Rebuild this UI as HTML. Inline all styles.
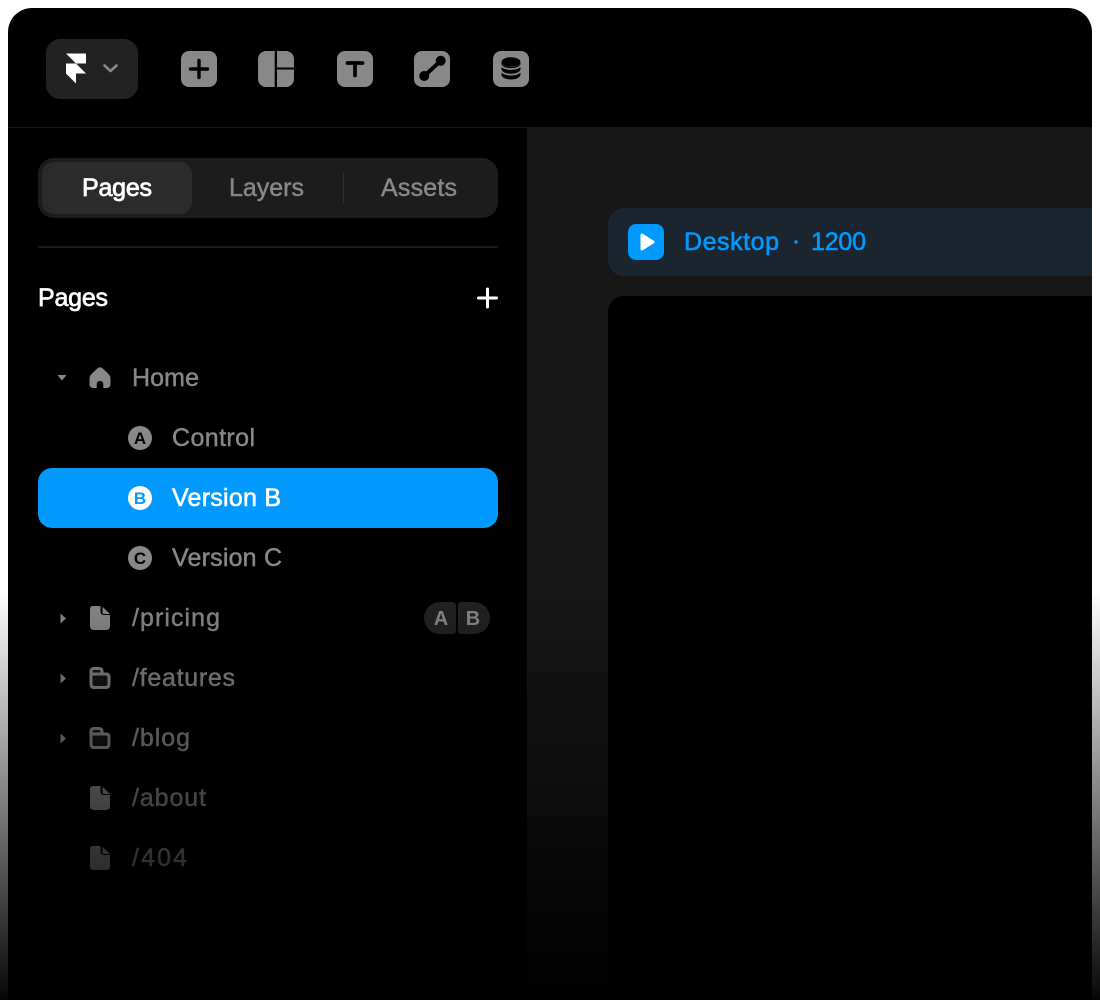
<!DOCTYPE html>
<html lang="en">
<head>
<meta charset="utf-8">
<title>Pages</title>
<style>
html,body{margin:0;padding:0;background:#fff;width:1100px;height:1000px;overflow:hidden}
svg{display:block}
text{font-family:"Liberation Sans",sans-serif;font-size:25px;fill:#888;stroke:#888;stroke-width:.45px}
.w{fill:#fff;stroke:#fff}
.b{fill:#09f;stroke:#09f;stroke-width:.6px}
.l{font-weight:700;font-size:17px;fill:#000;stroke:none;text-anchor:middle}
.s{font-size:20px;font-weight:700;stroke:none;text-anchor:middle}
</style>
</head>
<body>
<svg width="1100" height="1000" viewBox="0 0 1100 1000" xmlns="http://www.w3.org/2000/svg">
<defs>
<linearGradient id="fade" x1="0" y1="590" x2="0" y2="1010" gradientUnits="userSpaceOnUse">
<stop offset="0" stop-color="#000" stop-opacity="0"/>
<stop offset="1" stop-color="#000" stop-opacity="1"/>
</linearGradient>
</defs>
<!-- frame -->
<path d="M8 1000V32A24 24 0 0 1 32 8H1068A24 24 0 0 1 1092 32V1000Z" fill="#000"/>
<rect x="8" y="127" width="1084" height="1" fill="#141414"/>
<!-- canvas -->
<rect x="527" y="128" width="565" height="872" fill="#171717"/>
<path d="M1092 208H624A16 16 0 0 0 608 224V260A16 16 0 0 0 624 276H1092Z" fill="#1b2530"/>
<path d="M1092 296H624A16 16 0 0 0 608 312V1000H1092Z" fill="#000"/>
<rect x="628" y="224" width="36" height="36" rx="8" fill="#09f"/>
<path d="M642 235V249L653 242Z" fill="#fff" stroke="#fff" stroke-width="3" stroke-linejoin="round"/>
<text class="b" x="684" y="250" textLength="95" lengthAdjust="spacing">Desktop</text>
<circle cx="796" cy="242" r="1.7" fill="#09f"/>
<text class="b" x="811" y="250" textLength="55" lengthAdjust="spacing">1200</text>

<!-- toolbar -->
<rect x="46" y="39" width="92" height="60" rx="14" fill="#222"/>
<path d="M66 53.500H86V63.500H76ZM66 63.500H76L86 73.500H76V83.500L66 73.500Z" fill="#fff"/>
<path d="M104.500 65.500L110.500 71L116.500 65.500" fill="none" stroke="#888" stroke-width="2.600" stroke-linecap="round" stroke-linejoin="round"/>

<rect x="181" y="51" width="36" height="36" rx="8" fill="#888"/>
<path d="M199 60.500V77.500M190.500 69H207.500" stroke="#000" stroke-width="3.400" stroke-linecap="round" fill="none"/>

<path d="M266 51H274.700V87H266A8 8 0 0 1 258 79V59A8 8 0 0 1 266 51Z" fill="#888"/>
<path d="M277 51H286A8 8 0 0 1 294 59V67.500H277Z" fill="#888"/>
<path d="M277 69.500H294V79A8 8 0 0 1 286 87H277Z" fill="#888"/>

<rect x="337" y="51" width="36" height="36" rx="8" fill="#888"/>
<path d="M347.500 63H362.500M355 63V75.500" stroke="#000" stroke-width="3.800" stroke-linecap="round" fill="none"/>

<rect x="414" y="51" width="36" height="36" rx="8" fill="#888"/>
<path d="M424.200 76L440.700 60.800" stroke="#000" stroke-width="4" fill="none"/>
<circle cx="424.200" cy="76" r="5" fill="#000"/>
<circle cx="440.700" cy="60.800" r="5" fill="#000"/>

<rect x="493" y="51" width="36" height="36" rx="8" fill="#888"/>
<ellipse cx="511" cy="62" rx="9.500" ry="4.800" fill="#000"/>
<path d="M501.500 62V74.500C501.500 77.500 506 79.500 511 79.500S520.500 77.500 520.500 74.500V62C520.500 65 516 67 511 67S501.500 65 501.500 62Z" fill="#000"/>
<path d="M500.500 64.500C502.500 68.300 507 69 511 69S519.500 68.300 521.500 64.500" stroke="#888" stroke-width="1.800" fill="none"/>
<path d="M500.500 70C502.500 73.800 507 74.600 511 74.600S519.500 73.800 521.500 70" stroke="#888" stroke-width="1.800" fill="none"/>

<!-- tabs -->
<rect x="38" y="158" width="460" height="60" rx="16" fill="#1c1c1c"/>
<rect x="42" y="162" width="150" height="52" rx="12" fill="#2b2b2b"/>
<rect x="343" y="173" width="1" height="30" fill="#333"/>
<text class="w" x="82" y="196" textLength="70" lengthAdjust="spacing" style="stroke-width:.8px">Pages</text>
<text x="229" y="196" textLength="75" lengthAdjust="spacing">Layers</text>
<text x="381" y="196" textLength="76" lengthAdjust="spacing">Assets</text>
<rect x="38" y="246" width="460" height="2" fill="#191919"/>

<text class="w" x="38" y="306" textLength="70" lengthAdjust="spacing" style="stroke-width:.7px">Pages</text>
<path d="M487.500 289V307M478.500 298H496.500" stroke="#fff" stroke-width="3" fill="none" stroke-linecap="round"/>

<!-- tree -->
<path d="M57.500 375H66.500L62 380.500Z" fill="#888"/>
<path d="M100 367.300Q101.500 367.300 103 368.800L108.500 374Q110.500 376 110.500 379V384Q110.500 388 106.500 388H103.300V384.500Q103.300 381 100 381T96.700 384.500V388H93.500Q89.500 388 89.500 384V379Q89.500 376 91.500 374L97 368.800Q98.500 367.300 100 367.300Z" fill="#888"/>
<text x="132" y="386" textLength="67" lengthAdjust="spacing">Home</text>

<circle cx="140" cy="438" r="12" fill="#888"/>
<text class="l" x="140" y="444">A</text>
<text x="172" y="446" textLength="83" lengthAdjust="spacing">Control</text>

<rect x="38" y="468" width="460" height="60" rx="14" fill="#09f"/>
<circle cx="140" cy="498" r="12" fill="#fff"/>
<text class="l" x="140" y="504" style="fill:#09f">B</text>
<text class="w" x="172" y="506" textLength="109" lengthAdjust="spacing" style="stroke-width:.6px">Version B</text>

<circle cx="140" cy="558" r="12" fill="#888"/>
<text class="l" x="140" y="564">C</text>
<text x="172" y="566" textLength="110" lengthAdjust="spacing">Version C</text>

<path d="M60.500 613.500L66 618.500L60.500 623.500Z" fill="#888"/>
<path d="M93 606H100.500V611.500Q100.500 615 104 615H110V626Q110 630 106 630H94Q90 630 90 626V609Q90 606 93 606ZM102.500 606.800L110 614H104Q102.500 614 102.500 612.500Z" fill="#888"/>
<text x="132" y="626" textLength="88" lengthAdjust="spacing">/pricing</text>
<path d="M424 618A16 16 0 0 1 440 602H452Q456 602 456 606V630Q456 634 452 634H440A16 16 0 0 1 424 618Z" fill="#222"/>
<path d="M490 618A16 16 0 0 0 474 602H462Q458 602 458 606V630Q458 634 462 634H474A16 16 0 0 0 490 618Z" fill="#222"/>
<text class="s" x="441" y="625">A</text>
<text class="s" x="473" y="625">B</text>

<path d="M60.500 673.500L66 678.500L60.500 683.500Z" fill="#888"/>
<path d="M91 674V671.500Q91 668.500 94 668.500H99Q102 668.500 102 671.500V674H106Q109 674 109 677V684Q109 687.500 106 687.500H94Q91 687.500 91 684Z" fill="#151515" stroke="#888" stroke-width="3"/>
<path d="M91 674H106" stroke="#888" stroke-width="3"/>
<text x="132" y="686" textLength="103" lengthAdjust="spacing">/features</text>

<path d="M60.500 733.500L66 738.500L60.500 743.500Z" fill="#888"/>
<path d="M91 734V731.500Q91 728.500 94 728.500H99Q102 728.500 102 731.500V734H106Q109 734 109 737V744Q109 747.500 106 747.500H94Q91 747.500 91 744Z" fill="#151515" stroke="#888" stroke-width="3"/>
<path d="M91 734H106" stroke="#888" stroke-width="3"/>
<text x="132" y="746" textLength="58" lengthAdjust="spacing">/blog</text>

<path d="M93 786H100.500V791.500Q100.500 795 104 795H110V806Q110 810 106 810H94Q90 810 90 806V789Q90 786 93 786ZM102.500 786.800L110 794H104Q102.500 794 102.500 792.500Z" fill="#888"/>
<text x="132" y="806" textLength="74" lengthAdjust="spacing">/about</text>

<path d="M93 846H100.500V851.500Q100.500 855 104 855H110V866Q110 870 106 870H94Q90 870 90 866V849Q90 846 93 846ZM102.500 846.800L110 854H104Q102.500 854 102.500 852.500Z" fill="#888"/>
<text x="132" y="866" textLength="55" lengthAdjust="spacing">/404</text>

<!-- fade overlay -->
<rect x="0" y="590" width="1100" height="410" fill="url(#fade)"/>
</svg>
</body>
</html>
